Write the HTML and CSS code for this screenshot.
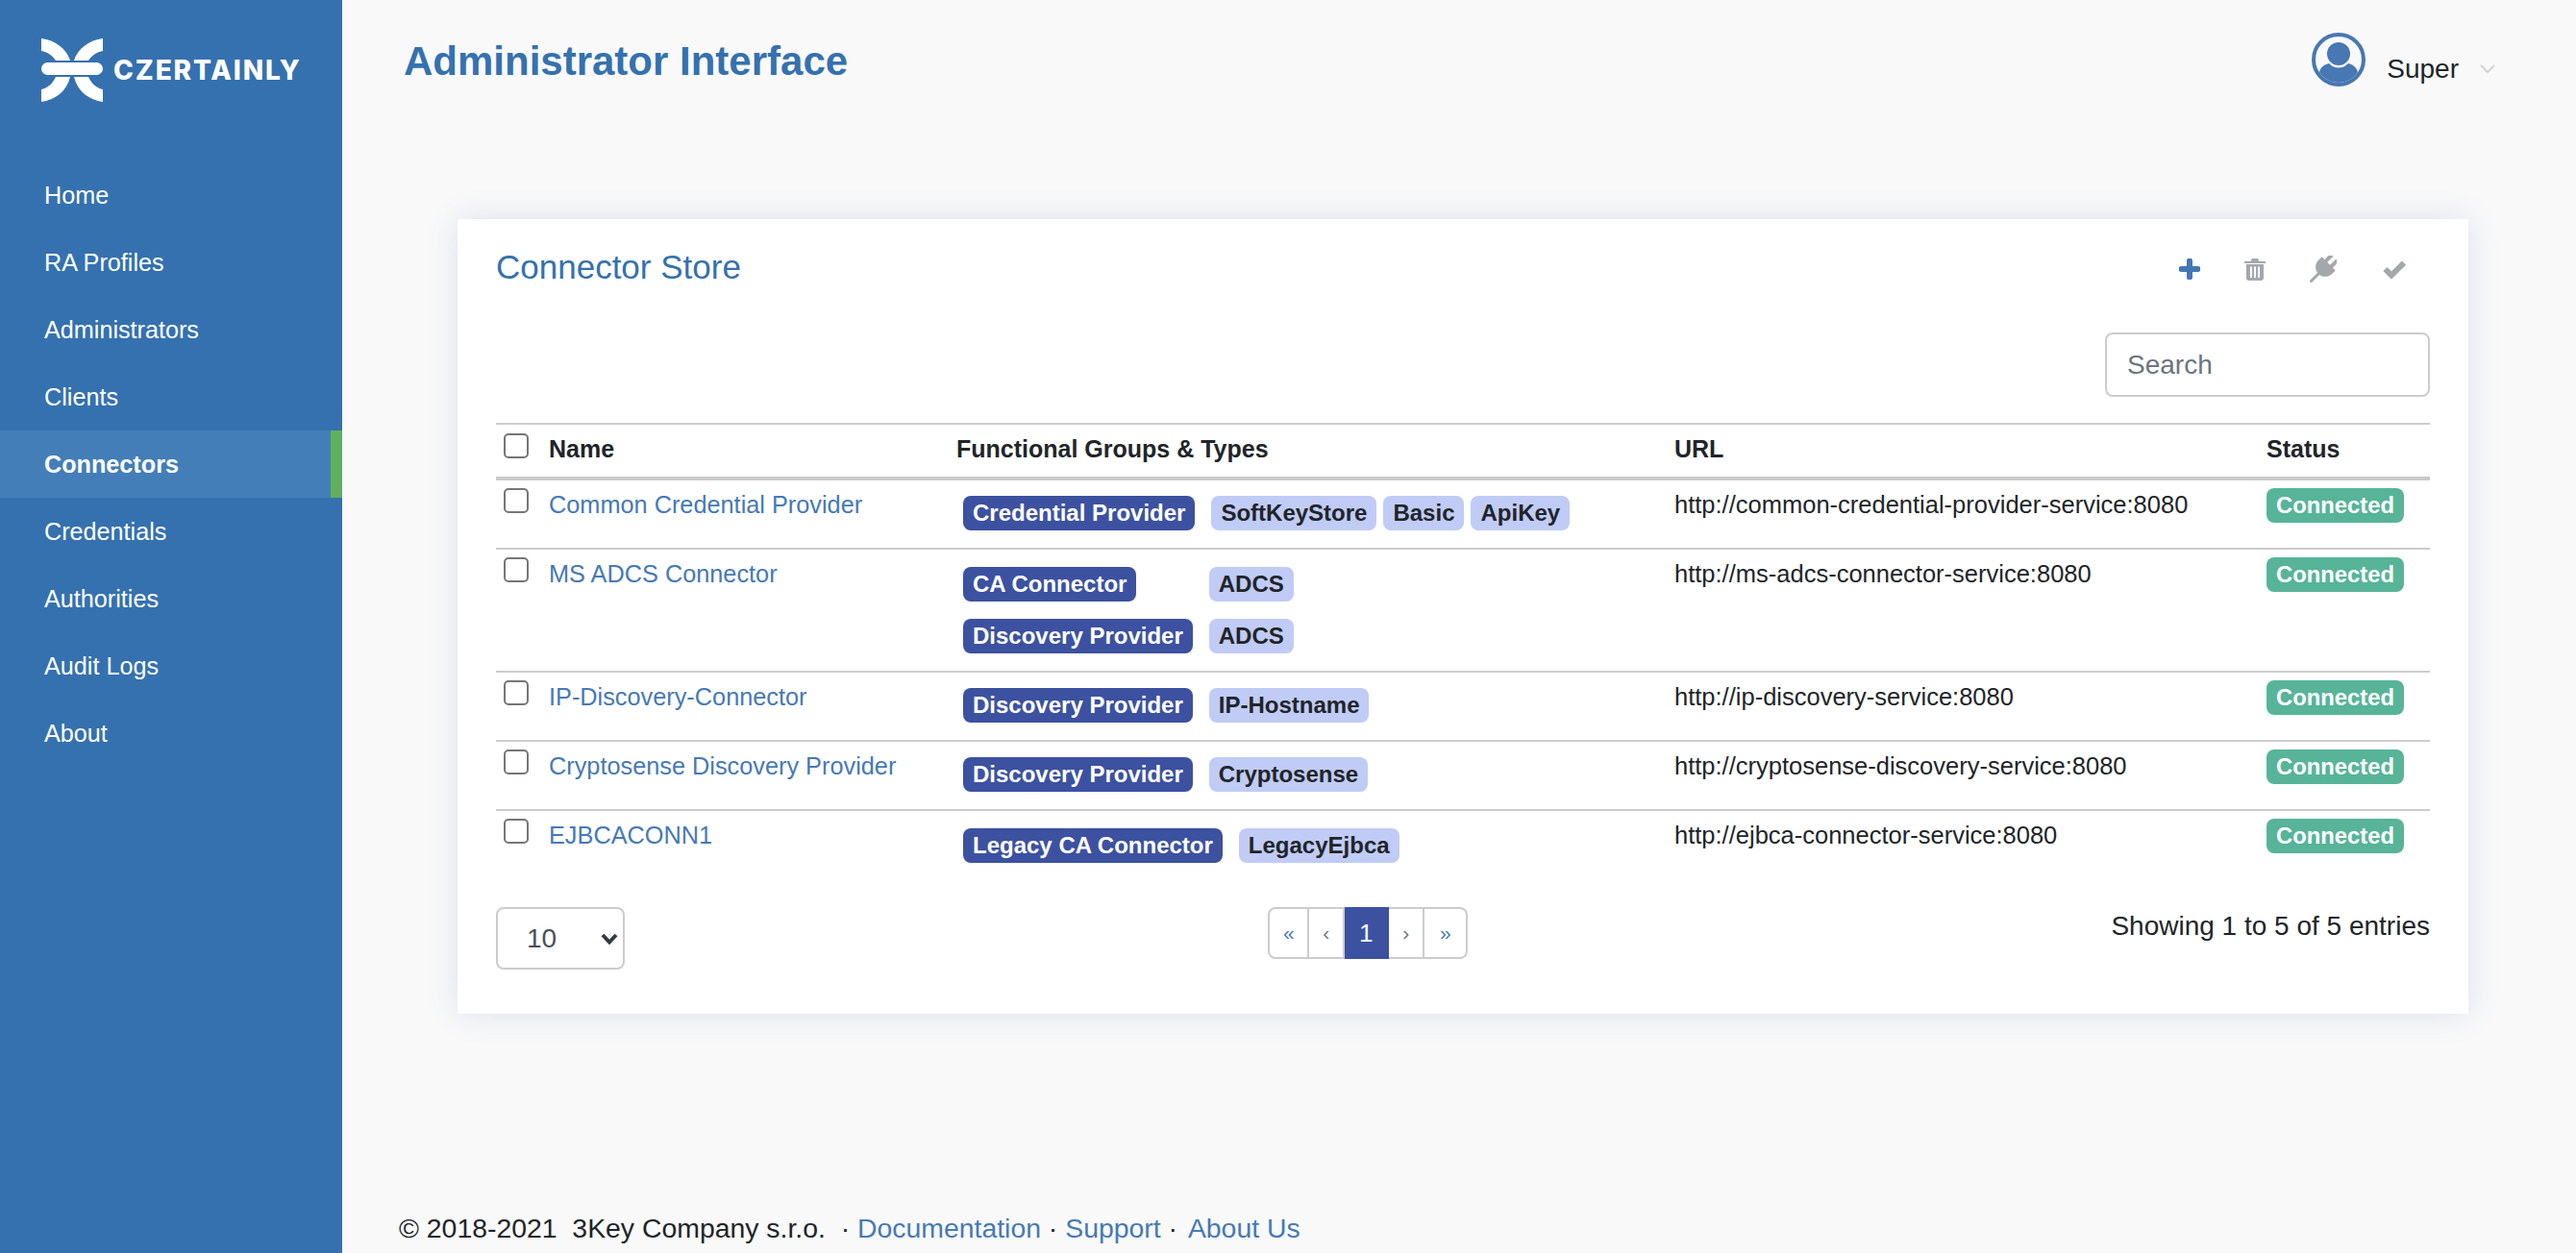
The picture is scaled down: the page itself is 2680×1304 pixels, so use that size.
FILE: index.html
```html
<!DOCTYPE html>
<html lang="en">
<head>
    <meta charset="UTF-8">
    <meta name="viewport" content="width=device-width, initial-scale=1.0">
    <title>Administrator Interface</title>
    <link rel="stylesheet" href="styles.css">
</head>
<body>
    <aside class="sidebar">
        <div class="logo">
            <svg class="logo-mark" width="64" height="66" viewBox="0 0 64 66" fill="#fff">
                <path d="M0 0C14 2 26 10 30 23H15C12 18 6 14 0 13Z"/>
                <path d="M64 0C50 2 38 10 34 23H49C52 18 58 14 64 13Z"/>
                <path d="M0 66C14 64 26 56 30 40H15C12 47 6 52 0 53Z"/>
                <path d="M64 66C50 64 38 56 34 40H49C52 47 58 52 64 53Z"/>
                <rect x="0" y="25" width="64" height="13" rx="6.5"/>
            </svg>
            <span class="logo-text">CZERTAINLY</span>
        </div>
        <nav class="nav">
            <a href="#">Home</a>
            <a href="#">RA Profiles</a>
            <a href="#">Administrators</a>
            <a href="#">Clients</a>
            <a href="#" class="active">Connectors</a>
            <a href="#">Credentials</a>
            <a href="#">Authorities</a>
            <a href="#">Audit Logs</a>
            <a href="#">About</a>
        </nav>
    </aside>

    <main class="main">
        <header class="topbar">
            <h1>Administrator Interface</h1>
            <div class="user">
                <svg width="56" height="56" viewBox="0 0 56 56">
                    <defs>
                        <clipPath id="avatar-clip"><circle cx="28" cy="28" r="24"/></clipPath>
                    </defs>
                    <circle cx="28" cy="28" r="26" fill="none" stroke="#4878b4" stroke-width="4"/>
                    <circle cx="28" cy="22" r="12" fill="#4878b4"/>
                    <path d="M8 56V42C8 37 13 33 18 32C21 35 24 36.500 28 36.500C32 36.500 35 35 38 32C43 33 48 37 48 42V56Z" fill="#4878b4" clip-path="url(#avatar-clip)"/>
                </svg>
                <span class="user-name">Super</span>
                <svg class="user-caret" width="16" height="10" viewBox="0 0 16 10">
                    <path d="M1 1L8 8L15 1" fill="none" stroke="#d2d2d2" stroke-width="2"/>
                </svg>
            </div>
        </header>

        <section class="card">
            <div class="card-head">
                <h2>Connector Store</h2>
                <div class="actions">
                    <svg width="22" height="22" viewBox="0 0 22 22">
                        <path d="M11 2.5V19.5M2.5 11H19.5" stroke="#4277b5" stroke-width="6" stroke-linecap="round"/>
                    </svg>
                    <svg width="22" height="24" viewBox="0 0 22 24" fill="#a3a8ab">
                        <path d="M0 4H6.5L8 1H14L15.500 4H22V6H0Z"/>
                        <path d="M2 7H20V21A3 3 0 0 1 17 24H5A3 3 0 0 1 2 21ZM6 9.500V21H8V9.500ZM10 9.500V21H12V9.500ZM14 9.500V21H16V9.500Z" fill-rule="evenodd"/>
                    </svg>
                    <svg width="28" height="28" viewBox="0 0 28 28" fill="#a3a8ab">
                        <g transform="rotate(45 14 14)">
                            <rect x="8" y="-3" width="4" height="11" rx="1.500"/>
                            <rect x="16" y="-3" width="4" height="11" rx="1.500"/>
                            <path d="M4 6H24V11C24 17 19 21 14 21C9 21 4 17 4 11Z"/>
                            <rect x="12.500" y="19" width="3" height="14" rx="1"/>
                        </g>
                    </svg>
                    <svg width="26" height="20" viewBox="0 0 26 20">
                        <path d="M4.500 10L11 16.500L24 3.500" fill="none" stroke="#a3a8ab" stroke-width="6"/>
                    </svg>
                </div>
            </div>

            <div class="search-row">
                <input class="search" type="text" placeholder="Search">
            </div>

            <table class="table">
                <colgroup>
                    <col class="col-check">
                    <col class="col-name">
                    <col class="col-groups">
                    <col class="col-url">
                    <col class="col-status">
                </colgroup>
                <thead>
                    <tr>
                        <th><input type="checkbox" class="check"></th>
                        <th>Name</th>
                        <th>Functional Groups &amp; Types</th>
                        <th>URL</th>
                        <th>Status</th>
                    </tr>
                </thead>
                <tbody>
                    <tr>
                        <td><input type="checkbox" class="check"></td>
                        <td><a href="#">Common Credential Provider</a></td>
                        <td>
                            <div class="groups">
                                <span class="badge group">Credential Provider</span>
                                <div class="types">
                                    <span class="badge type">SoftKeyStore</span>
                                    <span class="badge type">Basic</span>
                                    <span class="badge type">ApiKey</span>
                                </div>
                            </div>
                        </td>
                        <td>http://common-credential-provider-service:8080</td>
                        <td><span class="badge status">Connected</span></td>
                    </tr>
                    <tr>
                        <td><input type="checkbox" class="check"></td>
                        <td><a href="#">MS ADCS Connector</a></td>
                        <td>
                            <div class="groups low">
                                <span class="badge group">CA Connector</span>
                                <div class="types"><span class="badge type">ADCS</span></div>
                                <span class="badge group">Discovery Provider</span>
                                <div class="types"><span class="badge type">ADCS</span></div>
                            </div>
                        </td>
                        <td>http://ms-adcs-connector-service:8080</td>
                        <td><span class="badge status">Connected</span></td>
                    </tr>
                    <tr>
                        <td><input type="checkbox" class="check"></td>
                        <td><a href="#">IP-Discovery-Connector</a></td>
                        <td>
                            <div class="groups">
                                <span class="badge group">Discovery Provider</span>
                                <div class="types"><span class="badge type">IP-Hostname</span></div>
                            </div>
                        </td>
                        <td>http://ip-discovery-service:8080</td>
                        <td><span class="badge status">Connected</span></td>
                    </tr>
                    <tr>
                        <td><input type="checkbox" class="check"></td>
                        <td><a href="#">Cryptosense Discovery Provider</a></td>
                        <td>
                            <div class="groups">
                                <span class="badge group">Discovery Provider</span>
                                <div class="types"><span class="badge type">Cryptosense</span></div>
                            </div>
                        </td>
                        <td>http://cryptosense-discovery-service:8080</td>
                        <td><span class="badge status">Connected</span></td>
                    </tr>
                    <tr>
                        <td><input type="checkbox" class="check"></td>
                        <td><a href="#">EJBCACONN1</a></td>
                        <td>
                            <div class="groups low">
                                <span class="badge group">Legacy CA Connector</span>
                                <div class="types"><span class="badge type">LegacyEjbca</span></div>
                            </div>
                        </td>
                        <td>http://ejbca-connector-service:8080</td>
                        <td><span class="badge status">Connected</span></td>
                    </tr>
                </tbody>
            </table>

            <div class="table-foot">
                <div class="page-size-wrap">
                    <select class="page-size">
                        <option>10</option>
                    </select>
                    <svg class="page-size-arrow" width="18" height="12" viewBox="0 0 18 12">
                        <path d="M2 2L9 9.500L16 2" fill="none" stroke="#343a40" stroke-width="4"/>
                    </svg>
                </div>
                <ul class="pager">
                    <li><a href="#">«</a></li>
                    <li><a href="#" class="muted">‹</a></li>
                    <li><a href="#" class="current">1</a></li>
                    <li><a href="#" class="muted">›</a></li>
                    <li><a href="#">»</a></li>
                </ul>
                <span class="entries">Showing 1 to 5 of 5 entries</span>
            </div>
        </section>

        <footer class="footer">
            © 2018-2021&nbsp; 3Key Company s.r.o. &nbsp;· <a href="#">Documentation</a> · <a href="#">Support</a> · <a href="#" class="footer-last">About Us</a>
        </footer>
    </main>
</body>
</html>
```

FILE: styles.css
```css
* {
    box-sizing: border-box;
}

body {
    font-family: "Liberation Sans", Arial, sans-serif;
    font-size: 25.5px;
    line-height: 34px;
    color: #212529;
    background-color: #f9f9f9;
    margin: 0;
    height: 100vh;
    display: flex;
    overflow: hidden;
}

a {
    color: #4679b5;
    text-decoration: none;
}

/* sidebar */
.sidebar {
    width: 356px;
    flex-shrink: 0;
    background-color: #3571ae;
}

.logo {
    display: flex;
    align-items: center;
    height: 168px;
    padding: 40px 0 62px 43px;
}

.logo-text {
    margin-left: 11px;
    color: #fff;
    font-family: Inter, "Liberation Sans", sans-serif;
    font-size: 28px;
    font-weight: 800;
    letter-spacing: 1.9px;
}

.nav a {
    display: block;
    height: 70px;
    padding-left: 46px;
    color: #fff;
    font-size: 25.2px;
    line-height: 70px;
}

.nav a.active {
    background-color: #437eb8;
    border-right: 12px solid #62b05d;
    font-weight: 700;
}

/* main column */
.main {
    flex: 1;
    display: flex;
    flex-direction: column;
    min-width: 0;
}

.topbar {
    height: 228px;
    padding: 34px 84px 0 64px;
    display: flex;
    justify-content: space-between;
    align-items: flex-start;
}

h1 {
    margin: 1px 0 0;
    font-size: 42px;
    line-height: 58px;
    color: #3571ae;
}

.user {
    display: flex;
    align-items: flex-start;
}

.user-name {
    margin: 18px 0 0 22px;
    font-size: 28px;
    line-height: 40px;
}

.user-caret {
    margin: 33px 0 0 22px;
}

/* card */
.card {
    margin: 0 112px 0 120px;
    padding: 25px 40px 46px;
    background: #fff;
    box-shadow: 0 0 30px rgba(60, 100, 170, 0.16);
}

.card-head {
    display: flex;
    justify-content: space-between;
    align-items: center;
    height: 50px;
    padding-right: 25px;
}

h2 {
    margin: 0;
    font-size: 35px;
    font-weight: 400;
    line-height: 50px;
    color: #3571ae;
}

.actions {
    display: flex;
    align-items: center;
    gap: 46px;
    margin-top: 3px;
}

.search-row {
    display: flex;
    justify-content: flex-end;
    margin-top: 43px;
}

.search {
    width: 338px;
    height: 67px;
    padding: 0 21px;
    border: 2px solid #ccc;
    border-radius: 8px;
    font-family: inherit;
    font-size: 28px;
    background: #fff;
}

.search::placeholder {
    color: #6c757d;
}

/* table */
.table {
    width: 100%;
    margin-top: 27px;
    border-collapse: separate;
    border-spacing: 0;
    table-layout: fixed;
}

.col-check { width: 47px; }
.col-name { width: 424px; }
.col-groups { width: 747px; }
.col-url { width: 616px; }
.col-status { width: 178px; }

.table th {
    height: 60px;
    padding: 9px 8px 0;
    text-align: left;
    vertical-align: top;
    font-size: 25px;
    line-height: 32px;
    border-top: 2px solid #ccc;
    border-bottom: 4px solid #c9c9c9;
}

.table td {
    padding: 8px;
    vertical-align: top;
    border-bottom: 2px solid #ccc;
}

.table td a {
    font-size: 25.3px;
}

.table tbody tr:last-child td {
    border-bottom: none;
}

.check {
    appearance: none;
    display: block;
    width: 26px;
    height: 26px;
    margin: 0;
    background: #fff;
    border: 2px solid #767676;
    border-radius: 5px;
}

.groups {
    display: grid;
    grid-template-columns: max-content max-content;
    column-gap: 17px;
    row-gap: 18px;
    padding: 8px 0 10px 7px;
}

.groups.low {
    padding-top: 10px;
}

.types {
    display: flex;
    gap: 7px;
}

.badge {
    display: inline-block;
    height: 36px;
    padding: 0 10px;
    border-radius: 8px;
    font-size: 23.8px;
    font-weight: 700;
    line-height: 36px;
    white-space: nowrap;
}

.badge.group {
    background-color: #3c52a0;
    color: #fff;
    font-size: 24px;
    justify-self: start;
}

.badge.type {
    background-color: #c0cbf6;
    color: #212529;
    font-size: 24px;
}

.badge.status {
    background-color: #57b498;
    color: #fff;
    vertical-align: top;
}

/* below the table */
.table-foot {
    display: flex;
    justify-content: space-between;
    align-items: flex-start;
    margin-top: 28px;
}

.page-size-wrap {
    position: relative;
}

.page-size {
    appearance: none;
    display: block;
    width: 134px;
    height: 65px;
    padding-left: 30px;
    background: #fff;
    border: 2px solid #ccc;
    border-radius: 8px;
    color: #495057;
    font-family: inherit;
    font-size: 28px;
}

.page-size-arrow {
    position: absolute;
    top: 27px;
    right: 7px;
}

.pager {
    display: flex;
    height: 54px;
    margin: 0;
    padding: 0;
    list-style: none;
    font-size: 21px;
}

.pager a {
    display: block;
    width: 43px;
    height: 54px;
    line-height: 50px;
    text-align: center;
    background: #fff;
    border: 2px solid #ccc;
    border-left-width: 0;
}

.pager li:first-child a {
    border-left-width: 2px;
    border-radius: 8px 0 0 8px;
}

.pager li:last-child a {
    width: 45px;
    border-radius: 0 8px 8px 0;
}

.pager li:nth-child(2) a,
.pager li:nth-child(4) a {
    width: 37px;
}

.pager a.muted {
    color: #6c757d;
}

.pager a.current {
    width: 46px;
    background-color: #3c52a0;
    border-color: #3c52a0;
    color: #fff;
    font-size: 26px;
}

.entries {
    font-size: 28px;
    line-height: 40px;
}

.footer {
    margin-top: auto;
    padding: 0 0 6px 59px;
    font-size: 28.4px;
    line-height: 40px;
}

.footer-last {
    margin-left: 3px;
}
```
